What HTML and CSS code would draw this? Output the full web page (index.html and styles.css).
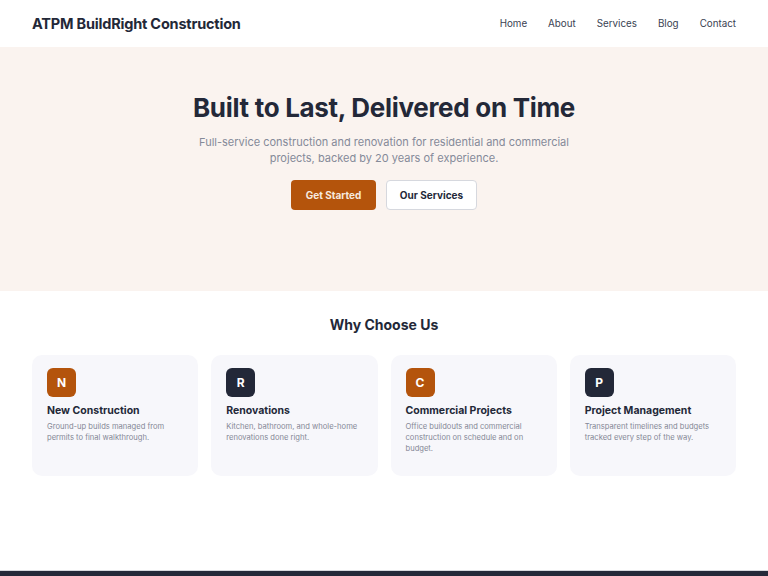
FILE: index.html
```html
<!DOCTYPE html>
<html lang="en">
<head>
<meta charset="utf-8">
<title>ATPM BuildRight Construction</title>
<link rel="stylesheet" href="styles.css">
</head>
<body>
<header class="site-header">
  <div class="logo">ATPM BuildRight Construction</div>
  <nav class="nav">
    <a href="#">Home</a>
    <a href="#">About</a>
    <a href="#">Services</a>
    <a href="#">Blog</a>
    <a href="#">Contact</a>
  </nav>
</header>
<section class="hero">
  <h1>Built to Last, Delivered on Time</h1>
  <p>Full-service construction and renovation for residential and commercial projects, backed by 20 years of experience.</p>
  <div class="actions">
    <a class="btn btn-primary" href="#">Get Started</a>
    <a class="btn btn-outline" href="#">Our Services</a>
  </div>
</section>
<section class="why">
  <h2>Why Choose Us</h2>
  <div class="cards">
    <div class="card">
      <div class="icon orange">N</div>
      <h3>New Construction</h3>
      <p>Ground-up builds managed from permits to final walkthrough.</p>
    </div>
    <div class="card">
      <div class="icon navy">R</div>
      <h3>Renovations</h3>
      <p>Kitchen, bathroom, and whole-home renovations done right.</p>
    </div>
    <div class="card">
      <div class="icon orange">C</div>
      <h3>Commercial Projects</h3>
      <p>Office buildouts and commercial construction on schedule and on budget.</p>
    </div>
    <div class="card">
      <div class="icon navy">P</div>
      <h3>Project Management</h3>
      <p>Transparent timelines and budgets tracked every step of the way.</p>
    </div>
  </div>
</section>
<footer class="footer"></footer>
</body>
</html>
```
FILE: styles.css
```css
* { box-sizing: border-box; }
html, body { margin: 0; padding: 0; }
body {
  font-family: Inter, "Noto Sans", sans-serif;
  color: #232838;
  background: #fff;
}
.site-header {
  height: 47px;
  display: flex;
  align-items: center;
  justify-content: space-between;
  padding: 0 32px;
  background: #fff;
}
.logo {
  font-size: 14.5px;
  font-weight: 700;
  letter-spacing: -0.2px;
}
.nav { display: flex; gap: 21px; }
.nav a {
  font-size: 9.8px;
  color: #3a3f52;
  text-decoration: none;
}
.hero {
  background: #faf3ef;
  height: 244px;
  padding-top: 44px;
  text-align: center;
}
.hero h1 {
  margin: 0;
  font-size: 26px;
  font-weight: 700;
  letter-spacing: -0.3px;
  line-height: 34px;
}
.hero p {
  margin: 9px auto 0;
  width: 380px;
  font-size: 11px;
  line-height: 16px;
  color: #858a99;
}
.actions {
  margin-top: 14px;
  display: flex;
  justify-content: center;
  gap: 10px;
}
.btn {
  height: 30px;
  display: inline-flex;
  align-items: center;
  justify-content: center;
  border-radius: 4px;
  font-size: 10px;
  font-weight: 700;
  text-decoration: none;
}
.btn-primary {
  width: 85px;
  background: #b4540c;
  color: #f7e9df;
}
.btn-outline {
  width: 91px;
  background: #fff;
  color: #232838;
  border: 1px solid #d6d8de;
}
.why {
  padding: 24px 32px 0;
  height: 279px;
}
.why h2 {
  margin: 0;
  text-align: center;
  font-size: 14px;
  font-weight: 700;
  line-height: 20px;
}
.cards {
  margin-top: 20px;
  display: grid;
  grid-template-columns: repeat(4, 1fr);
  gap: 13px;
}
.card {
  height: 121px;
  background: #f7f7fb;
  border-radius: 10px;
  padding: 13px 15px;
}
.icon {
  width: 29px;
  height: 29px;
  border-radius: 6px;
  color: #fff;
  display: flex;
  align-items: center;
  justify-content: center;
  font-size: 12px;
  font-weight: 700;
}
.icon.orange { background: #b4540c; }
.icon.navy { background: #232838; }
.card h3 {
  margin: 7px 0 0;
  font-size: 10.5px;
  font-weight: 700;
  line-height: 14px;
}
.card p {
  margin: 3px 0 0;
  font-size: 7.6px;
  line-height: 11px;
  color: #858896;
}
.footer {
  border-top: 1px solid #d8d9de;
  background: #252a3a;
  height: 60px;
}
```
